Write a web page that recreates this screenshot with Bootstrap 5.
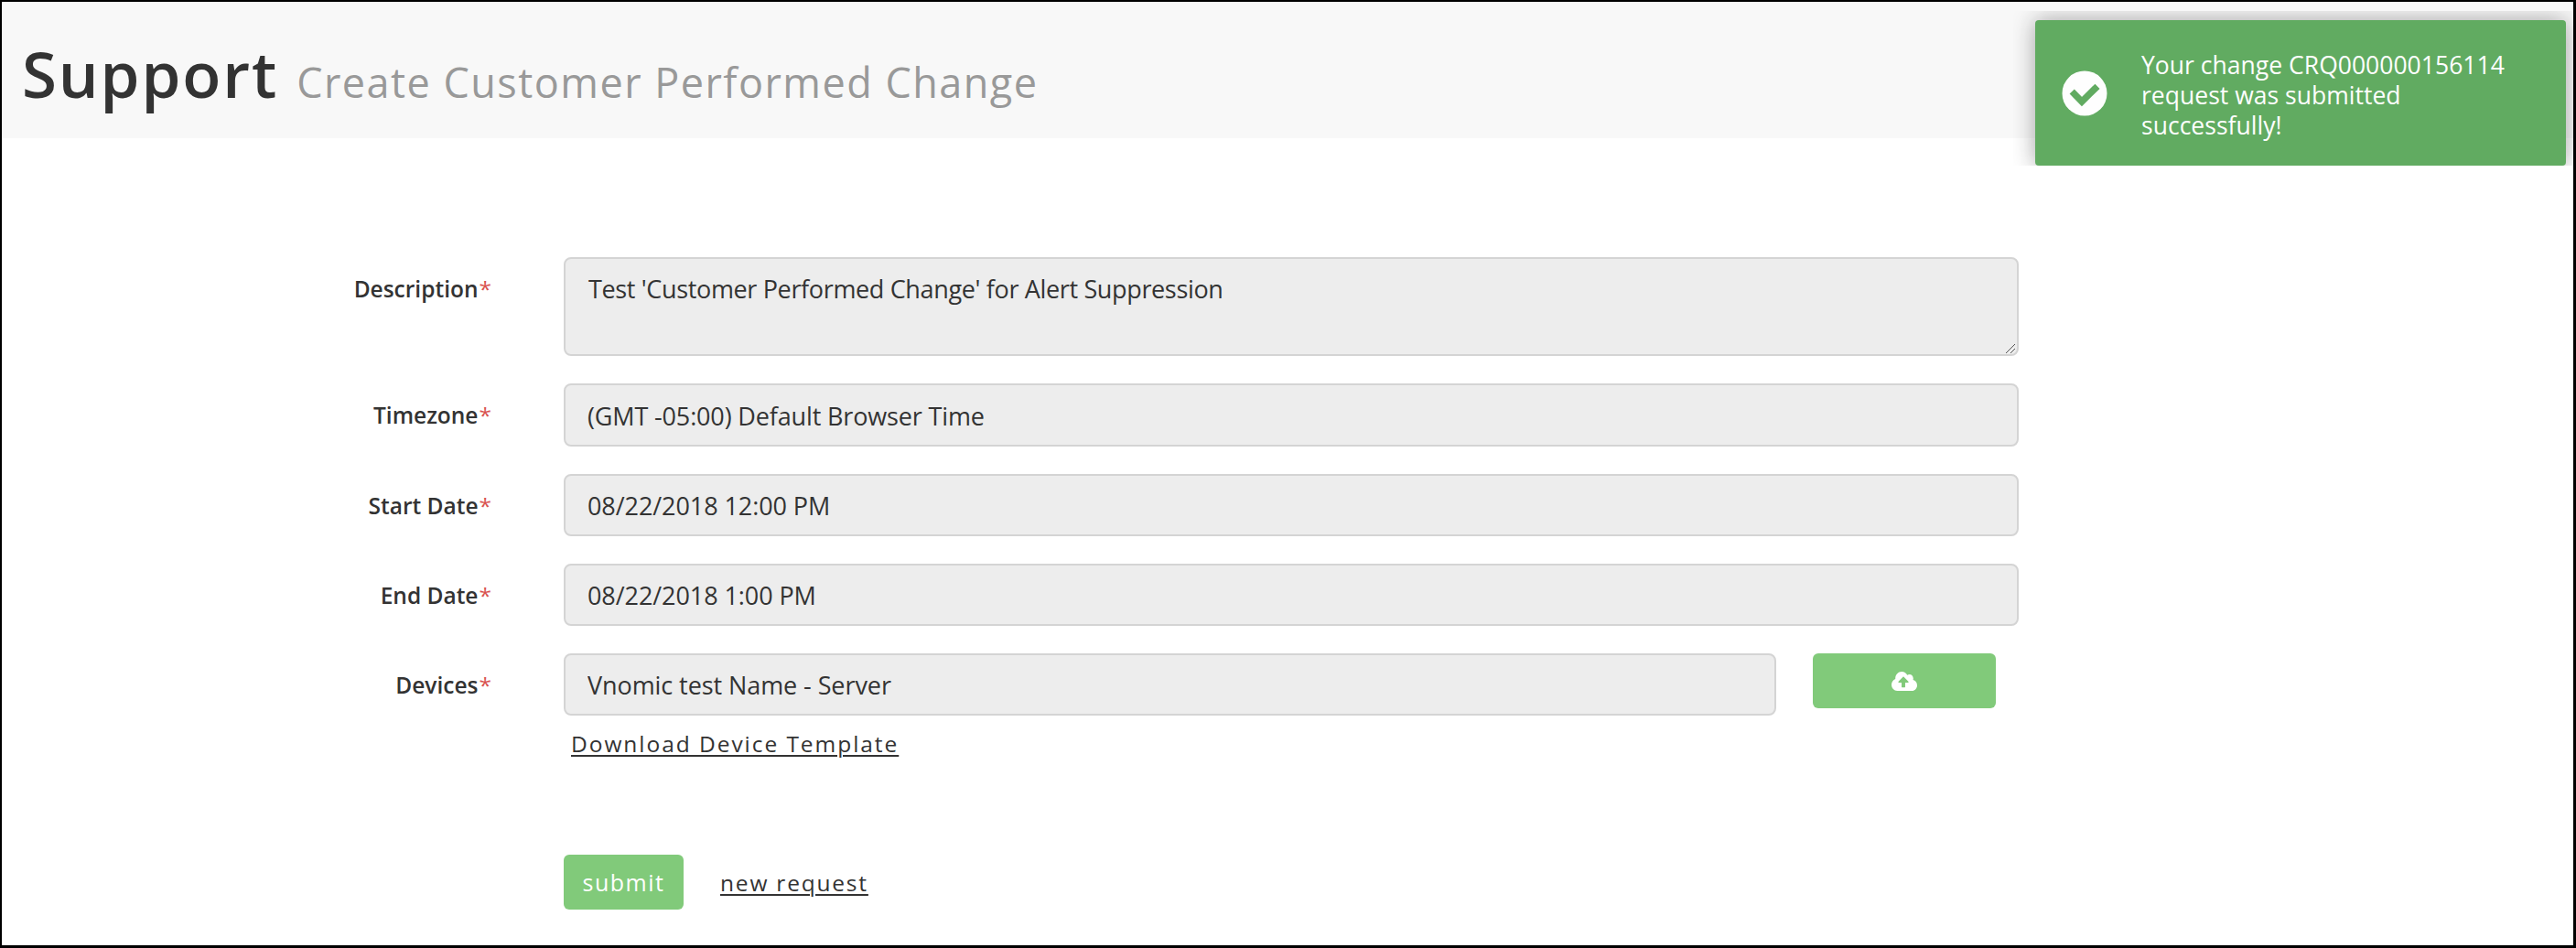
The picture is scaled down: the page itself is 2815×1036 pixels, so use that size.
<!DOCTYPE html>
<html lang="en">
<head>
<meta charset="utf-8">
<meta name="viewport" content="width=device-width, initial-scale=1">
<title>Support - Create Customer Performed Change</title>
<link href="https://cdn.jsdelivr.net/npm/bootstrap@5.3.0/dist/css/bootstrap.min.css" rel="stylesheet">
<script src="https://cdn.jsdelivr.net/npm/bootstrap@5.3.0/dist/js/bootstrap.bundle.min.js"></script>
<style>
body{font-family:"Open Sans","Noto Sans",sans-serif;color:#333;background:#fff}
.app-frame{height:1036px;border:solid #000;border-width:2px 3px 3px 2px}
.page-head{height:149px;background:#f8f8f8;padding:24px 0 0 22px}
.page-head h1{font-size:69px;font-weight:600;letter-spacing:1.9px;line-height:108px;color:#333;white-space:nowrap}
.page-head small{font-size:45px;font-weight:400;letter-spacing:1.47px;color:#999;margin-left:20px}
.change-form{padding-top:130px}
.form-line{gap:79px;margin-bottom:30px}
.field-label{width:535px;font-size:24.5px;font-weight:600;line-height:69px;letter-spacing:0}
.field-label span{color:#d9534f;font-weight:400;margin-left:1px}
.field-box{width:1590px}
.form-control.field{height:68px;font-size:27px;letter-spacing:-.08px;line-height:38px;color:#333;background:#ededed;border:2px solid #d4d4d4;border-radius:8px;padding:13px 24px}
textarea.form-control.field{height:108px;padding-top:14px;padding-left:25px;letter-spacing:-.35px;resize:none}
.form-control.field-zone{height:69px;padding-top:14px;padding-bottom:13px;letter-spacing:-.15px}
.grip{right:4px;bottom:3px}
.field-devices{width:1325px}
.btn.btn-green{height:60px;background:#81ca7a;color:#fff;border:0;border-radius:6px}
.btn-upload{width:200px;margin-right:25px}
.btn-submit{width:131px;font-size:25px;font-weight:500;letter-spacing:1.5px;line-height:60px}
.text-link{color:#333;font-size:24.5px;letter-spacing:1.95px;line-height:40px;text-decoration-thickness:2px;text-underline-offset:3px}
.text-link:hover{color:#000}
.template-line{margin:-19px 0 0 622px;height:40px}
.action-line{margin:101px 0 0 614px;gap:40px}
.action-line .text-link{letter-spacing:1.8px;padding-top:1px}
.toast-zone{top:12px;right:3px;padding:10px 8px 0 24px;overflow:hidden}
.notice{width:580px;height:159px;border-radius:4px;background:#51a351;color:#fff;opacity:.9;box-shadow:0 0 24px #999;padding-left:29px;gap:37px}
.notice p{font-size:26.5px;line-height:33px;letter-spacing:.02px;width:420px;padding-top:5px}
</style>
</head>
<body>
<div class="app-frame position-relative overflow-hidden">
  <header class="page-head">
    <h1 class="m-0">Support<small>Create Customer Performed Change</small></h1>
  </header>

  <form class="change-form">
    <div class="form-line d-flex align-items-start">
      <label class="field-label text-end" for="description">Description<span>*</span></label>
      <div class="field-box position-relative">
        <textarea id="description" class="form-control field" readonly>Test 'Customer Performed Change' for Alert Suppression</textarea>
        <svg class="grip position-absolute" width="10" height="10" viewBox="0 0 10 10" stroke="#555" stroke-width="1"><path d="M0 10 10 0M5 10 10 5"/></svg>
      </div>
    </div>
    <div class="form-line d-flex align-items-start">
      <label class="field-label text-end" for="timezone">Timezone<span>*</span></label>
      <div class="field-box"><input id="timezone" class="form-control field field-zone" value="(GMT -05:00) Default Browser Time" readonly></div>
    </div>
    <div class="form-line d-flex align-items-start" style="height:68px">
      <label class="field-label text-end" for="start">Start Date<span>*</span></label>
      <div class="field-box"><input id="start" class="form-control field" value="08/22/2018 12:00 PM" readonly></div>
    </div>
    <div class="form-line d-flex align-items-start" style="height:68px">
      <label class="field-label text-end" for="end">End Date<span>*</span></label>
      <div class="field-box"><input id="end" class="form-control field" value="08/22/2018 1:00 PM" readonly></div>
    </div>
    <div class="form-line d-flex align-items-start" style="height:68px">
      <label class="field-label text-end" for="devices">Devices<span>*</span></label>
      <div class="field-box d-flex align-items-start">
        <input id="devices" class="form-control field field-devices flex-shrink-0" value="Vnomic test Name - Server" readonly>
        <button type="button" class="btn btn-green btn-upload p-0 ms-auto d-flex align-items-center justify-content-center" aria-label="Upload">
          <svg width="28" height="21" viewBox="0 32 640 448" preserveAspectRatio="none" fill="#fff"><path d="M537.6 226.6c4.1-10.7 6.4-22.4 6.4-34.6 0-53-43-96-96-96-19.7 0-38.1 6-53.3 16.2C367 64.2 315.3 32 256 32c-88.4 0-160 71.6-160 160 0 2.7.1 5.4.2 8.1C40.2 219.8 0 273.2 0 336c0 79.5 64.500 144 144 144h368c70.700 0 128-57.300 128-128 0-61.900-44-113.600-102.400-125.400zM410 288H342v102c0 6-4 10-10 10h-70c-6 0-10-4-10-10V288h-66c-14.300 0-21.400-17.200-11.300-27.300l111-105.400c6.200-6.200 16.400-6.200 22.600 0l113 105.400c10.100 10.100 2.900 27.300-11.300 27.300z"/></svg>
        </button>
      </div>
    </div>
    <div class="template-line"><a href="#" class="text-link">Download Device Template</a></div>
    <div class="action-line d-flex align-items-center">
      <button type="button" class="btn btn-green btn-submit p-0">submit</button>
      <a href="#" class="text-link">new request</a>
    </div>
  </form>
</div>

<div class="toast-zone position-absolute">
  <div class="notice d-flex align-items-center" role="alert">
    <svg class="flex-shrink-0" width="50" height="50" viewBox="0 0 50 50"><circle cx="25" cy="25" r="24.500" fill="#fff"/><path d="M11.200 23 22 34 39 17.300" fill="none" stroke="#51a351" stroke-width="7.300"/></svg>
    <p class="m-0">Your change CRQ000000156114 request was submitted successfully!</p>
  </div>
</div>
</body>
</html>
